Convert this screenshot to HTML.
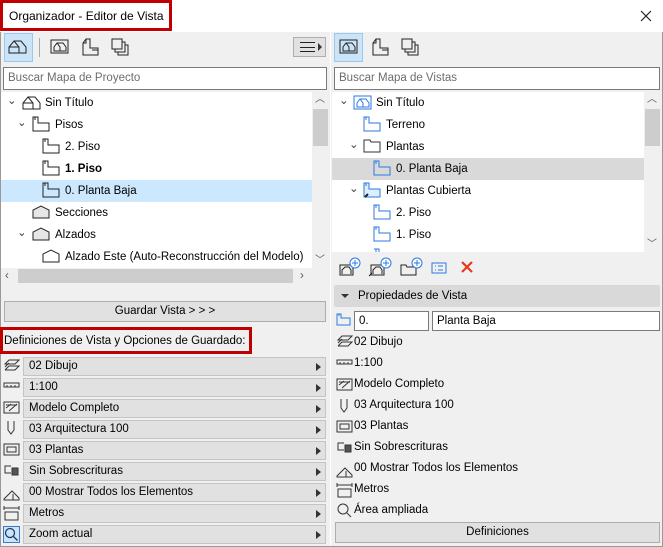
<!DOCTYPE html>
<html><head><meta charset="utf-8"><style>
*{box-sizing:border-box;margin:0;padding:0}
body{width:663px;height:547px;overflow:hidden;background:#f0f0f0;font-family:"Liberation Sans",sans-serif;font-size:11.5px;color:#000;position:relative}
.a{position:absolute}
.t{position:absolute;white-space:nowrap;line-height:14px}
.btn{position:absolute;background:#e1e1e1;border:1px solid #adadad}
.inp{position:absolute;background:#fff;border:1px solid #7a7a7a;padding-left:4px;line-height:21px;color:#6d6d6d}
.row{position:absolute;height:19px;background:#e1e1e1;border:1px solid #c4c4c4;line-height:17px;padding-left:5px}
.row:after{content:"";position:absolute;right:4px;top:5px;border-left:5px solid #333;border-top:4px solid transparent;border-bottom:4px solid transparent}
svg{position:absolute}
</style></head><body>
<div class="a" style="left:0;top:0;width:663px;height:32px;background:#fff"></div>
<div class="a" style="left:0;top:0;width:172px;height:31px;border:3px solid #c00000"></div>
<div class="t" style="left:9px;top:9px;font-size:12px">Organizador - Editor de Vista</div>
<svg style="left:640px;top:10px" width="12" height="12" stroke="#222" stroke-width="1.2"><path d="M1 1l10 10M11 1L1 11"/></svg>
<div class="a" style="left:0;top:32px;width:1px;height:515px;background:#999"></div>
<div class="a" style="left:662px;top:32px;width:1px;height:515px;background:#999"></div>
<div class="a" style="left:0;top:546px;width:663px;height:1px;background:#999"></div>
<div class="a" style="left:330px;top:32px;width:1px;height:514px;background:#fff"></div>

<div class="a" style="left:4px;top:33px;width:29px;height:29px;background:#cce4f7;border:1px solid #99c9ef"></div>
<svg style="left:8px;top:38px" width="20" height="18" viewBox="0 0 20 18" fill="none" stroke="#222"><path d="M1 15V9L6 3h7l5 6v6zM6 3l5 6v6M1 9h10"/></svg>
<div class="a" style="left:39px;top:38px;width:1px;height:19px;background:#aaa"></div>
<svg style="left:50px;top:39px" width="20" height="16" fill="none" stroke="#222"><rect x="1" y="1" width="17" height="13"/><path d="M4 12V8l3-4h6l3 4v4zM7 4l3 4v4"/></svg>
<svg style="left:80px;top:38px" width="20" height="18" fill="none" stroke="#222"><path d="M3 17V5L6 1h4v9h8v7zM6 1v4H3M12 12h6"/></svg>
<svg style="left:111px;top:38px" width="18" height="18" fill="none" stroke="#222"><rect x="1" y="1" width="10" height="10"/><path d="M4 11v3h10V4h-3M7 14v3h10V7h-3"/></svg>
<div class="a" style="left:293px;top:37px;width:33px;height:20px;background:#e1e1e1;border:1px solid #adadad"></div>
<div class="a" style="left:300px;top:42px;width:15px;height:10px;border-top:1px solid #222;border-bottom:1px solid #222"></div>
<div class="a" style="left:300px;top:47px;width:15px;height:1px;background:#222"></div>
<div class="a" style="left:318px;top:43px;border-left:4px solid #333;border-top:4px solid transparent;border-bottom:4px solid transparent"></div>

<div class="inp" style="left:3px;top:67px;width:324px;height:23px">Buscar Mapa de Proyecto</div>
<div class="a" style="left:1px;top:92px;width:311px;height:176px;background:#fff"></div>
<div class="a" style="left:1px;top:180px;width:311px;height:22px;background:#cce8ff"></div>
<div class="a" style="left:312px;top:92px;width:17px;height:176px;background:#f0f0f0"></div>
<div class="a" style="left:313px;top:109px;width:15px;height:37px;background:#cdcdcd"></div>
<div class="t" style="left:315px;top:93px;font-size:10px;color:#555">︿</div>
<div class="t" style="left:315px;top:254px;font-size:10px;color:#555">﹀</div>
<div class="a" style="left:1px;top:268px;width:311px;height:17px;background:#f0f0f0"></div>
<div class="a" style="left:18px;top:269px;width:275px;height:14px;background:#cdcdcd"></div>
<div class="t" style="left:5px;top:269px;color:#555">‹</div>
<div class="t" style="left:300px;top:269px;color:#555">›</div>

<div class="t" style="left:7px;top:94px;color:#444">⌄</div>
<svg style="left:22px;top:95px" width="20" height="15" fill="none" stroke="#222"><path d="M1 14V8L6 2h7l5 6v6zM6 2l5 6v6M1 8h10"/></svg>
<div class="t" style="left:45px;top:96px">Sin Título</div>
<div class="t" style="left:17px;top:116px;color:#444">⌄</div>
<svg style="left:32px;top:116px" width="18" height="16" fill="none" stroke="#222"><path d="M1 1h5v6h11v8H1zM3 1v3"/></svg>
<div class="t" style="left:55px;top:118px">Pisos</div>
<svg style="left:42px;top:138px" width="18" height="16" fill="none" stroke="#222"><path d="M1 1h5v6h11v8H1zM3 1v3"/></svg>
<div class="t" style="left:65px;top:140px">2. Piso</div>
<svg style="left:42px;top:160px" width="18" height="16" fill="none" stroke="#222"><path d="M1 1h5v6h11v8H1zM3 1v3"/></svg>
<div class="t" style="left:65px;top:162px;font-weight:bold">1. Piso</div>
<svg style="left:42px;top:182px" width="18" height="16" fill="none" stroke="#222"><path d="M1 1h5v6h11v8H1zM3 1v3"/></svg>
<div class="t" style="left:65px;top:184px">0. Planta Baja</div>
<svg style="left:32px;top:205px" width="18" height="14" fill="#e6e6e6" stroke="#222"><path d="M1 13V5L9 1l8 4v8z"/></svg>
<div class="t" style="left:55px;top:206px">Secciones</div>
<div class="t" style="left:17px;top:226px;color:#444">⌄</div>
<svg style="left:32px;top:227px" width="18" height="14" fill="#e6e6e6" stroke="#222"><path d="M1 13V5L9 1l8 4v8z"/></svg>
<div class="t" style="left:55px;top:228px">Alzados</div>
<svg style="left:42px;top:249px" width="18" height="14" fill="#fff" stroke="#222"><path d="M1 13V5L9 1l8 4v8z"/></svg>
<div class="t" style="left:65px;top:250px">Alzado Este (Auto-Reconstrucción del Modelo)</div>

<div class="btn" style="left:4px;top:301px;width:322px;height:21px;text-align:center;line-height:19px">Guardar Vista &gt; &gt; &gt;</div>
<div class="a" style="left:0;top:327px;width:252px;height:27px;border:3px solid #c00000"></div>
<div class="t" style="left:4px;top:334px">Definiciones de Vista y Opciones de Guardado:</div>

<div class="row" style="left:23px;top:357px;width:303px">02 Dibujo</div>
<div class="row" style="left:23px;top:378px;width:303px">1:100</div>
<div class="row" style="left:23px;top:399px;width:303px">Modelo Completo</div>
<div class="row" style="left:23px;top:420px;width:303px">03 Arquitectura 100</div>
<div class="row" style="left:23px;top:441px;width:303px">03 Plantas</div>
<div class="row" style="left:23px;top:462px;width:303px">Sin Sobrescrituras</div>
<div class="row" style="left:23px;top:483px;width:303px">00 Mostrar Todos los Elementos</div>
<div class="row" style="left:23px;top:504px;width:303px">Metros</div>
<div class="row" style="left:23px;top:525px;width:303px">Zoom actual</div>

<svg style="left:3px;top:358px" width="17" height="170" fill="none" stroke="#333">
<path d="M2 6l4-4h10l-4 4zM2 9l4-4M2 12l4-4h10l-4 4H2"/>
<path d="M1 25h15v4H1zM4 27v2M8 27v2M12 27v2"/>
<rect x="1" y="44" width="15" height="11"/><path d="M3 50l5-4M6 53l8-7M3 47h11"/>
<path d="M5 63v9l3 4 3-4v-9"/>
<rect x="1" y="86" width="15" height="11"/><rect x="4" y="89" width="9" height="5"/>
<path d="M8 108H2v7h6"/><rect x="9" y="110" width="6" height="7" fill="#555"/>
<path d="M1 141l8-8 7 7v2H1zM10 136v6"/>
<path d="M1 150h15M1 148v4M16 148v4M2 154h13v8H2z"/>
</svg>
<div class="a" style="left:3px;top:526px;width:17px;height:17px;background:#cce4f7;border:1px solid #3e7ac7"></div>
<svg style="left:4px;top:527px" width="15" height="15" fill="none" stroke="#1c3e6c" stroke-width="1.3"><circle cx="6" cy="6" r="4.5"/><path d="M9.5 9.5l4 4"/></svg>

<div class="a" style="left:334px;top:33px;width:29px;height:29px;background:#cce4f7;border:1px solid #99c9ef"></div>
<svg style="left:339px;top:39px" width="20" height="16" fill="none" stroke="#222"><rect x="1" y="1" width="17" height="13"/><path d="M4 12V8l3-4h6l3 4v4zM7 4l3 4v4"/></svg>
<svg style="left:370px;top:38px" width="20" height="18" fill="none" stroke="#222"><path d="M3 17V5L6 1h4v9h8v7zM6 1v4H3M12 12h6"/></svg>
<svg style="left:401px;top:38px" width="18" height="18" fill="none" stroke="#222"><rect x="1" y="1" width="10" height="10"/><path d="M4 11v3h10V4h-3M7 14v3h10V7h-3"/></svg>

<div class="inp" style="left:334px;top:67px;width:326px;height:23px">Buscar Mapa de Vistas</div>
<div class="a" style="left:332px;top:92px;width:312px;height:160px;background:#fff"></div>
<div class="a" style="left:332px;top:158px;width:312px;height:22px;background:#d9d9d9"></div>
<div class="a" style="left:644px;top:92px;width:17px;height:160px;background:#f0f0f0"></div>
<div class="a" style="left:645px;top:109px;width:15px;height:37px;background:#cdcdcd"></div>
<div class="t" style="left:647px;top:93px;font-size:10px;color:#555">︿</div>
<div class="t" style="left:647px;top:238px;font-size:10px;color:#555">﹀</div>

<div class="t" style="left:339px;top:94px;color:#444">⌄</div>
<svg style="left:353px;top:95px" width="20" height="16" fill="none" stroke="#2a7ae2"><rect x="1" y="1" width="17" height="13"/><path d="M4 12V8l3-4h6l3 4v4zM7 4l3 4v4"/></svg>
<div class="t" style="left:376px;top:96px">Sin Título</div>
<svg style="left:363px;top:116px" width="18" height="16" fill="none" stroke="#2a7ae2"><path d="M1 1h5v6h11v8H1zM3 1v3"/></svg>
<div class="t" style="left:386px;top:118px">Terreno</div>
<div class="t" style="left:349px;top:138px;color:#444">⌄</div>
<svg style="left:363px;top:139px" width="18" height="14" fill="none" stroke="#333"><path d="M1 1h6l1 2h9v10H1z"/></svg>
<div class="t" style="left:386px;top:140px">Plantas</div>
<svg style="left:373px;top:160px" width="18" height="16" fill="none" stroke="#2a7ae2"><path d="M1 1h5v6h11v8H1zM3 1v3"/></svg>
<div class="t" style="left:396px;top:162px">0. Planta Baja</div>
<div class="t" style="left:349px;top:182px;color:#444">⌄</div>
<svg style="left:363px;top:182px" width="18" height="16" fill="#dfeefe" stroke="#2a7ae2"><path d="M1 1h5v6h11v8H1zM3 1v3"/><path d="M2 15l3-3" stroke="#222" stroke-width="2"/></svg>
<div class="t" style="left:386px;top:184px">Plantas Cubierta</div>
<svg style="left:373px;top:204px" width="18" height="16" fill="none" stroke="#2a7ae2"><path d="M1 1h5v6h11v8H1zM3 1v3"/></svg>
<div class="t" style="left:396px;top:206px">2. Piso</div>
<svg style="left:373px;top:226px" width="18" height="16" fill="none" stroke="#2a7ae2"><path d="M1 1h5v6h11v8H1zM3 1v3"/></svg>
<div class="t" style="left:396px;top:228px">1. Piso</div>
<svg style="left:373px;top:248px" width="18" height="4" fill="none" stroke="#2a7ae2"><path d="M1 1h5v6M3 1v3"/></svg>

<svg style="left:338px;top:256px" width="140" height="22" fill="none">
<g stroke="#222"><rect x="2" y="9" width="13" height="10"/><path d="M4 18v-4l3-3h4l2 3v4"/></g><circle cx="17" cy="7" r="5" stroke="#2a7ae2" fill="#fff"/><path d="M17 4v6M14 7h6" stroke="#2a7ae2"/>
<g stroke="#222"><rect x="33" y="9" width="13" height="10"/><path d="M35 18v-4l3-3h4l2 3v4M31 20l3-3" /></g><circle cx="48" cy="7" r="5" stroke="#2a7ae2" fill="#fff"/><path d="M48 4v6M45 7h6" stroke="#2a7ae2"/>
<path d="M63 9h5l1 2h9v8H63z" stroke="#222"/><circle cx="79" cy="7" r="5" stroke="#2a7ae2" fill="#fff"/><path d="M79 4v6M76 7h6" stroke="#2a7ae2"/>
<rect x="94" y="7" width="14" height="10" stroke="#2a7ae2"/><path d="M97 10h1M100 10h5M97 14h1M100 14h5" stroke="#2a7ae2"/>
<path d="M124 6l10 10M134 6l-10 10" stroke="#e8381d" stroke-width="2.2"/>
</svg>

<div class="a" style="left:334px;top:285px;width:326px;height:22px;background:#d9d9d9;border-radius:2px"></div>
<div class="a" style="left:341px;top:294px;border-top:4px solid #333;border-left:4px solid transparent;border-right:4px solid transparent"></div>
<div class="t" style="left:358px;top:289px">Propiedades de Vista</div>
<svg style="left:336px;top:313px" width="15" height="13" fill="none" stroke="#2a7ae2"><path d="M1 1h4v4h9v7H1zM3 1v2"/></svg>
<div class="inp" style="left:354px;top:311px;width:75px;height:20px;line-height:18px;color:#000">0.</div>
<div class="inp" style="left:432px;top:311px;width:228px;height:20px;line-height:18px;color:#000">Planta Baja</div>

<svg style="left:336px;top:334px" width="17" height="190" fill="none" stroke="#333">
<path d="M2 6l4-4h10l-4 4zM2 9l4-4M2 12l4-4h10l-4 4H2"/>
<path d="M1 26h15v4H1zM4 28v2M8 28v2M12 28v2"/>
<rect x="1" y="45" width="15" height="11"/><path d="M3 51l5-4M6 54l8-7M3 48h11"/>
<path d="M5 65v9l3 4 3-4v-9"/>
<rect x="1" y="87" width="15" height="11"/><rect x="4" y="90" width="9" height="5"/>
<path d="M8 109H2v7h6"/><rect x="9" y="111" width="6" height="7" fill="#555"/>
<path d="M1 142l8-8 7 7v2H1zM10 137v6"/>
<path d="M1 151h15M1 149v4M16 149v4M2 155h13v8H2z"/>
<circle cx="7" cy="175" r="5"/><path d="M11 179l4 4"/>
</svg>
<div class="t" style="left:354px;top:335px">02 Dibujo</div>
<div class="t" style="left:354px;top:356px">1:100</div>
<div class="t" style="left:354px;top:377px">Modelo Completo</div>
<div class="t" style="left:354px;top:398px">03 Arquitectura 100</div>
<div class="t" style="left:354px;top:419px">03 Plantas</div>
<div class="t" style="left:354px;top:440px">Sin Sobrescrituras</div>
<div class="t" style="left:354px;top:461px">00 Mostrar Todos los Elementos</div>
<div class="t" style="left:354px;top:482px">Metros</div>
<div class="t" style="left:354px;top:503px">Área ampliada</div>
<div class="btn" style="left:335px;top:522px;width:325px;height:21px;text-align:center;line-height:19px">Definiciones</div>
</body></html>
